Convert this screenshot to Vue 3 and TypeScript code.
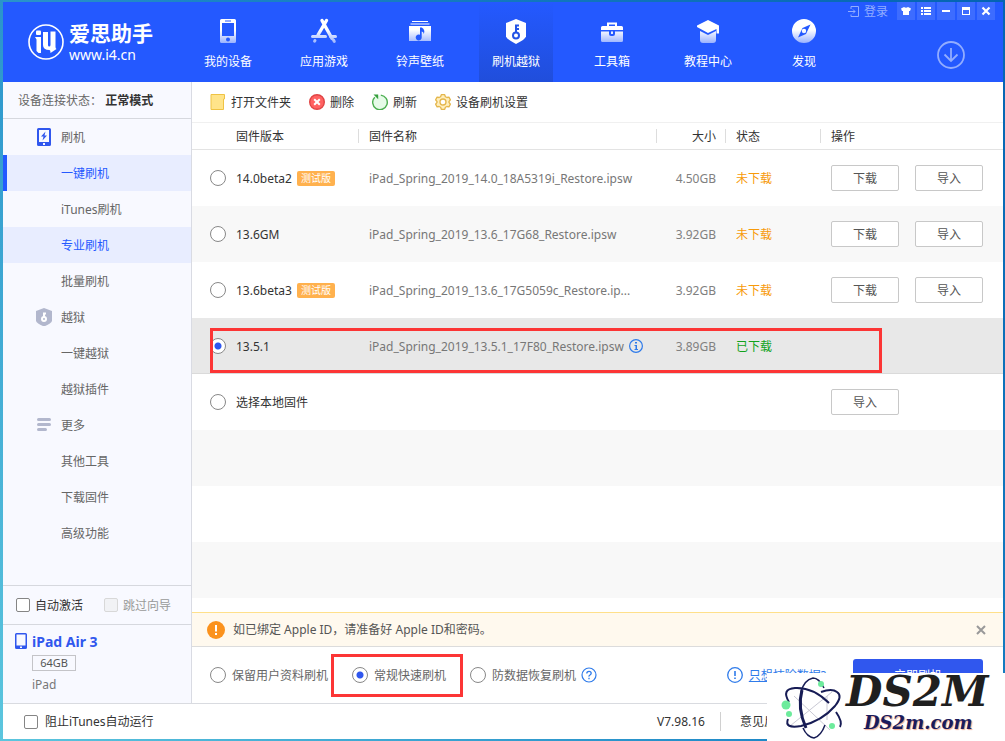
<script setup lang="ts">
import { ref } from 'vue'

interface NavItem {
  key: string
  label: string
}

interface SideItem {
  label: string
  icon?: 'flash' | 'shield' | 'more'
  active?: boolean
  current?: boolean
}

interface Firmware {
  id: string
  version: string
  beta?: boolean
  file?: string
  info?: boolean
  size?: string
  status?: string
  done?: boolean
  actions: string[]
}

const navItems: NavItem[] = [
  { key: 'device', label: '我的设备' },
  { key: 'apps', label: '应用游戏' },
  { key: 'media', label: '铃声壁纸' },
  { key: 'flash', label: '刷机越狱' },
  { key: 'tools', label: '工具箱' },
  { key: 'learn', label: '教程中心' },
  { key: 'discover', label: '发现' },
]

const sideItems: SideItem[] = [
  { label: '刷机', icon: 'flash' },
  { label: '一键刷机', active: true, current: true },
  { label: 'iTunes刷机' },
  { label: '专业刷机', active: true },
  { label: '批量刷机' },
  { label: '越狱', icon: 'shield' },
  { label: '一键越狱' },
  { label: '越狱插件' },
  { label: '更多', icon: 'more' },
  { label: '其他工具' },
  { label: '下载固件' },
  { label: '高级功能' },
]

const firmwares: Firmware[] = [
  { id: 'a', version: '14.0beta2', beta: true, file: 'iPad_Spring_2019_14.0_18A5319i_Restore.ipsw', size: '4.50GB', status: '未下载', actions: ['下载', '导入'] },
  { id: 'b', version: '13.6GM', file: 'iPad_Spring_2019_13.6_17G68_Restore.ipsw', size: '3.92GB', status: '未下载', actions: ['下载', '导入'] },
  { id: 'c', version: '13.6beta3', beta: true, file: 'iPad_Spring_2019_13.6_17G5059c_Restore.ip...', size: '3.92GB', status: '未下载', actions: ['下载', '导入'] },
  { id: 'd', version: '13.5.1', file: 'iPad_Spring_2019_13.5.1_17F80_Restore.ipsw', info: true, size: '3.89GB', status: '已下载', done: true, actions: [] },
  { id: 'e', version: '选择本地固件', actions: ['导入'] },
]

const modes = [
  { id: 'keep', label: '保留用户资料刷机' },
  { id: 'fast', label: '常规快速刷机' },
  { id: 'rescue', label: '防数据恢复刷机' },
]

const selected = ref('d')
const mode = ref('fast')
const autoActivate = ref(false)
const blockItunes = ref(false)
</script>

<template>
  <div class="desktop">
    <div class="window">
      <header class="header">
        <div class="brand">
          <svg class="brand-mark" width="36" height="36" viewBox="0 0 36 36" aria-hidden="true">
            <circle cx="18" cy="18" r="17" fill="none" stroke="#fff" stroke-width="1.6" />
            <rect x="8" y="6.500" width="5" height="4.500" rx="1" fill="#fff" />
            <path d="M7 13h6v16H10.500L8.500 27V15.500z" fill="#fff" />
            <path d="M15 8h5v13q0 1.500 1.200 1.500T22.500 21V7.500h5V23q0 1.500 1 2l-6 4q0-3-1-3-6.500 0-6.500-5z" fill="#fff" />
          </svg>
          <div class="brand-text">
            <div class="brand-name">爱思助手</div>
            <div class="brand-url">www.i4.cn</div>
          </div>
        </div>
        <nav class="nav">
          <button v-for="n in navItems" :key="n.key" type="button" class="nav-item" :class="{ on: n.key === 'flash' }">
            <svg width="26" height="26" viewBox="0 0 26 26" aria-hidden="true">
              <defs>
                <linearGradient :id="'g-' + n.key" x1="0" y1="0" x2="0" y2="26" gradientUnits="userSpaceOnUse">
                  <stop offset="0.45" stop-color="#fff" />
                  <stop offset="1" stop-color="#92adff" />
                </linearGradient>
              </defs>
              <g :fill="'url(#g-' + n.key + ')'">
                <path v-if="n.key === 'device'" fill-rule="evenodd" d="M6.500 1h13A1.500 1.500 0 0 1 21 2.500v21a1.500 1.500 0 0 1-1.500 1.500h-13A1.500 1.500 0 0 1 5 23.500v-21A1.500 1.500 0 0 1 6.500 1zM7 5v13h12V5zM10 2.500v1h6v-1zM13 19.500a2 2 0 1 0 0 4 2 2 0 0 0 0-4z" />
                <g v-else-if="n.key === 'apps'" fill="none" :stroke="'url(#g-' + n.key + ')'" stroke-linecap="round">
                  <path d="M11 2.500l10 18M15.500 2.500L7 17" stroke-width="3.400" />
                  <path d="M1.500 18.500h13M19.500 18.500h5" stroke-width="3" />
                  <path d="M22.500 22l.8 1.400M4 22.500l-.4.700" stroke-width="3" />
                </g>
                <path v-else-if="n.key === 'media'" fill-rule="evenodd" d="M5 3h16v1H5zM3.500 5.500h19v1h-19zM2 8h22v15H2zM13 9.500v7.300a3 3 0 1 0 1.700 2.700v-6q2 .3 2 2.500 2-4-2-6.500z" />
                <g v-else-if="n.key === 'flash'">
                  <path d="M13 1l10 4v13.500q-1 3-10 7.500-9-4.500-10-7.500V5z" fill="#fff" />
                  <path d="M13 15V6.500M13 7.500h3M13 11h3" fill="none" stroke="#2353e6" stroke-width="2" />
                  <circle cx="13" cy="17.500" r="3" fill="none" stroke="#2353e6" stroke-width="2" />
                </g>
                <g v-else-if="n.key === 'tools'">
                  <path d="M9 8V5.500h8V8" fill="none" stroke="#fff" stroke-width="2" />
                  <path d="M3.500 8h19Q24 8 24 9.500V12H2V9.500Q2 8 3.500 8zM2 13.500h8V16q0 2 2 2h2q2 0 2-2v-2.500h8v9q0 1.500-1.500 1.500h-19Q2 24 2 22.500z" />
                  <path d="M12 13.500h2V16h-2z" />
                </g>
                <g v-else-if="n.key === 'learn'">
                  <path d="M13 2l11 5.500v8h-2.500V11L13 15 2 9V7.500z" fill="#fff" />
                  <path d="M5 13l8 4 8-4v9q0 3-3 3H8q-3 0-3-3z" />
                </g>
                <path v-else fill-rule="evenodd" d="M13 1a12 12 0 1 1 0 24 12 12 0 0 1 0-24zM19.500 6.500l-8 3.500-4.500 9.500 8-3.500zM13 10.800a2.200 2.200 0 1 1 0 4.400 2.200 2.200 0 0 1 0-4.400z" />
              </g>
            </svg>
            <span>{{ n.label }}</span>
          </button>
        </nav>
        <div class="head-right">
          <div class="win-controls">
            <button type="button" class="login">
              <svg width="12" height="12" viewBox="0 0 12 12" fill="none" stroke="currentColor" aria-hidden="true">
                <path d="M3 3V.500h7.500v10H3V8.500M0 5.500h7M5 3.500l2 2-2 2" />
              </svg>
              <span>登录</span>
            </button>
            <button type="button" class="ctl" aria-label="皮肤">
              <svg width="10" height="10" viewBox="0 0 10 10"><path d="M3 1q2 1.500 4 0l3 1.500L9 5H8v4H2V5H1L0 2.500z" fill="#fff" /></svg>
            </button>
            <button type="button" class="ctl" aria-label="菜单">
              <svg width="10" height="10" viewBox="0 0 10 10"><path d="M0 1h2v2H0zM3 1h7v2H3zM0 4h2v2H0zM3 4h7v2H3zM0 7h2v2H0zM3 7h7v2H3z" fill="#fff" /></svg>
            </button>
            <button type="button" class="ctl" aria-label="最小化">
              <svg width="10" height="10" viewBox="0 0 10 10"><path d="M1 4h8v2H1z" fill="#fff" /></svg>
            </button>
            <button type="button" class="ctl" aria-label="最大化">
              <svg width="10" height="10" viewBox="0 0 10 10"><path fill-rule="evenodd" d="M1 1h8v8H1zM2 4v4h6V4z" fill="#fff" /></svg>
            </button>
            <button type="button" class="ctl" aria-label="关闭">
              <svg width="10" height="10" viewBox="0 0 10 10"><path d="M1.500 1.500l7 7M8.500 1.500l-7 7" stroke="#fff" stroke-width="2.200" /></svg>
            </button>
          </div>
          <button type="button" class="downloads" aria-label="下载管理">
            <svg width="28" height="28" viewBox="0 0 28 28" fill="none" stroke="#92adff">
              <circle cx="14" cy="14" r="13" stroke-width="1.800" />
              <path d="M14 7v13M7.500 13.500L14 20l6.500-6.500" stroke-width="1.800" />
            </svg>
          </button>
        </div>
      </header>

      <div class="body">
        <aside class="side">
          <div class="conn">设备连接状态： <b>正常模式</b></div>
          <nav class="side-nav">
            <a v-for="s in sideItems" :key="s.label" href="#" class="side-item" :class="{ active: s.active, current: s.current }">
              <svg v-if="s.icon === 'flash'" width="16" height="18" viewBox="0 0 16 18" aria-hidden="true">
                <path fill-rule="evenodd" d="M2.500 0h11Q15 0 15 1.500v15q0 1.500-1.500 1.500h-11Q1 18 1 16.500v-15Q1 0 2.500 0zM3 2v12h10V2zM7 15v2h2v-2z" fill="#3057ee" />
                <path d="M9.500 3.500L5 8.500h2.500L6.500 12.500 11 7.500H8.500z" fill="#3057ee" />
              </svg>
              <svg v-else-if="s.icon === 'shield'" width="16" height="18" viewBox="0 0 16 18" aria-hidden="true">
                <path d="M8 0l8 3v10q-1 2.500-8 5.500-7-3-8-5.500V3z" fill="#b2b7cd" />
                <path d="M8 9V4.500M8 5.500h2" stroke="#fff" stroke-width="2" />
                <circle cx="8" cy="11" r="2" fill="none" stroke="#fff" stroke-width="2" />
              </svg>
              <svg v-else-if="s.icon === 'more'" width="16" height="18" viewBox="0 0 16 18" aria-hidden="true">
                <path d="M2.500 3.500h11M2.500 8.500h11M2.500 13.500h7" stroke="#b2b7cd" stroke-width="3" stroke-linecap="round" />
              </svg>
              <span v-else class="no-icon"></span>
              <span>{{ s.label }}</span>
            </a>
          </nav>
          <div class="side-checks">
            <label class="check"><input v-model="autoActivate" type="checkbox" /><span>自动激活</span></label>
            <label class="check off"><input type="checkbox" disabled /><span>跳过向导</span></label>
          </div>
          <div class="device">
            <svg width="12" height="16" viewBox="0 0 12 16" aria-hidden="true">
              <path fill-rule="evenodd" d="M1.500 0h9Q12 0 12 1.500v13q0 1.500-1.500 1.500h-9Q0 16 0 14.500v-13Q0 0 1.500 0zM1.500 1.500v11h9v-11zM5 13.500v1.500h2v-1.500z" fill="#3057ee" />
            </svg>
            <div class="device-text">
              <div class="device-name">iPad Air 3</div>
              <div class="capacity">64GB</div>
              <div class="device-type">iPad</div>
            </div>
          </div>
        </aside>

        <main class="main">
          <div class="toolbar">
            <button type="button" class="tool">
              <svg width="16" height="16" viewBox="0 0 16 16" aria-hidden="true">
                <path d="M1 .500h13.500V5h-1v10.500H1z" fill="#ffe48a" stroke="#efc344" />
              </svg>
              <span>打开文件夹</span>
            </button>
            <button type="button" class="tool">
              <svg width="16" height="16" viewBox="0 0 16 16" aria-hidden="true">
                <circle cx="8" cy="8" r="7.300" fill="#ff6262" stroke="#e04545" stroke-width="1.400" />
                <path d="M5.200 5.200l5.600 5.600M10.800 5.200l-5.600 5.600" stroke="#fff" stroke-width="2" />
              </svg>
              <span>删除</span>
            </button>
            <button type="button" class="tool">
              <svg width="16" height="16" viewBox="0 0 16 16" aria-hidden="true">
                <circle cx="8" cy="8.500" r="7" fill="#e6fbe8" />
                <path d="M8.800 1.100A7.300 7.300 0 1 1 2.800 3.200" fill="none" stroke="#4caf50" stroke-width="1.400" />
                <path d="M1.500.500h4.700v4.700z" fill="#35a03c" />
              </svg>
              <span>刷新</span>
            </button>
            <button type="button" class="tool">
              <svg width="16" height="16" viewBox="0 0 16 16" aria-hidden="true">
                <path d="M6.300 .700h3.400l.7 2 1.500.8 2-.4 1.500 2.800L14 7.500v1l1.400 1.600-1.500 2.800-2-.4-1.500.8-.7 2H6.300l-.7-2-1.500-.8-2 .4L.6 10.100 2 8.500v-1L.6 5.900l1.500-2.800 2 .4 1.500-.8z" fill="#ffefbe" stroke="#e4b64c" stroke-width="1.300" stroke-linejoin="round" />
                <circle cx="8" cy="8" r="3" fill="#fff" stroke="#e4b64c" stroke-width="1.300" />
              </svg>
              <span>设备刷机设置</span>
            </button>
          </div>

          <div class="list">
            <table>
              <colgroup>
                <col class="c-ver" /><col /><col class="c-size" /><col class="c-state" /><col class="c-ops" />
              </colgroup>
              <thead>
                <tr>
                  <th class="ver-head">固件版本</th>
                  <th>固件名称</th>
                  <th class="size">大小</th>
                  <th>状态</th>
                  <th>操作</th>
                </tr>
              </thead>
              <tbody>
                <tr v-for="f in firmwares" :key="f.id" :class="{ sel: f.id === selected }">
                  <td class="ver">
                    <label class="pick">
                      <input v-model="selected" type="radio" name="firmware" :value="f.id" />
                      <span>{{ f.version }}</span>
                      <span v-if="f.beta" class="tag">测试版</span>
                    </label>
                    <i v-if="f.id === 'd'" class="frame"></i>
                  </td>
                  <td class="name">
                    <div class="file">
                      <span>{{ f.file }}</span>
                      <svg v-if="f.info" width="14" height="14" viewBox="0 0 14 14" aria-hidden="true">
                        <circle cx="7" cy="7" r="6.400" fill="none" stroke="#2f7bea" stroke-width="1.200" />
                        <path d="M6 3h2v1.500H6zM5.500 6H8v4h1v1H5.500v-1h1V7h-1z" fill="#2f7bea" />
                      </svg>
                    </div>
                  </td>
                  <td class="size">{{ f.size }}</td>
                  <td class="state" :class="{ done: f.done }">{{ f.status }}</td>
                  <td>
                    <div class="ops">
                      <button v-for="a in f.actions" :key="a" type="button" class="op">{{ a }}</button>
                    </div>
                  </td>
                </tr>
              </tbody>
            </table>
            <div class="stripes"></div>
          </div>

          <div class="notice">
            <svg width="18" height="18" viewBox="0 0 18 18" aria-hidden="true">
              <circle cx="9" cy="9" r="9" fill="#fb921d" />
              <path d="M8 4h2v6.500H8zM8 12h2v2H8z" fill="#fff" />
            </svg>
            <span>如已绑定 Apple ID，请准备好 Apple ID和密码。</span>
            <button type="button" class="close" aria-label="关闭提示">
              <svg width="10" height="10" viewBox="0 0 10 10"><path d="M1 1l8 8M9 1L1 9" stroke="#999" stroke-width="2" /></svg>
            </button>
          </div>

          <div class="options">
            <label v-for="m in modes" :key="m.id" class="mode" :class="{ framed: m.id === 'fast' }">
              <input v-model="mode" type="radio" name="mode" :value="m.id" />
              <span>{{ m.label }}</span>
            </label>
            <button type="button" class="help" aria-label="帮助">
              <svg width="16" height="16" viewBox="0 0 16 16" fill="none" stroke="#2f7bea">
                <circle cx="8" cy="8" r="7" stroke-width="1.200" />
                <path d="M5.800 6.500Q5.800 4.300 8 4.300t2.200 2Q10.200 7.300 9 8t-1 1.600M8 10.800v1.400" stroke-width="1.300" />
              </svg>
            </button>
            <div class="erase">
              <svg width="16" height="16" viewBox="0 0 16 16" fill="none" stroke="#2f7bea" aria-hidden="true">
                <circle cx="8" cy="8" r="7.300" stroke-width="1.300" />
                <path d="M8 4v5M8 10.500V12" stroke-width="1.600" />
              </svg>
              <a href="#">只想抹除数据?</a>
            </div>
            <button type="button" class="start">立即刷机</button>
          </div>
        </main>
      </div>

      <footer class="foot">
        <label class="check"><input v-model="blockItunes" type="checkbox" /><span>阻止iTunes自动运行</span></label>
        <span class="version">V7.98.16</span>
        <a href="#" class="feedback">意见反馈</a>
      </footer>
    </div>

    <div class="mark">
      <svg width="66" height="64" viewBox="0 0 66 64" fill="none" aria-hidden="true">
        <path d="M10 50L52 16M14 20l36 34M47 20v24" stroke="#c9c9d4" stroke-width="1" />
        <path d="M44 12Q39 2 33 2 24 4 21 16M23 52q4 9 11 10 7-2 11-13" stroke="#171c55" stroke-width="1.500" />
        <path d="M9 26Q1 13 15 12 33 11 49 27M56 36q7 10 4 15" stroke="#171c55" stroke-width="2" />
        <path d="M8 43Q4 53 21 50 42 45 55 30 63 20 57 16q-5-4-16 0" stroke="#171c55" stroke-width="2" />
        <path d="M22 14Q17 32 26 52" stroke="#171c55" stroke-width="3" />
        <circle cx="41" cy="8" r="3" fill="#6deb9c" />
        <circle cx="6" cy="29" r="4.500" fill="#6deb9c" />
        <circle cx="9" cy="38" r="3" fill="#6deb9c" />
        <circle cx="52" cy="50" r="3" fill="#6deb9c" />
      </svg>
      <div class="mark-text">
        <div class="mark-big">DS2M</div>
        <div class="mark-small">DS2m.com</div>
      </div>
    </div>
  </div>
</template>

<style>
body {
  margin: 0;
}
</style>

<style scoped>
.desktop {
  position: relative;
  box-sizing: border-box;
  min-height: 100vh;
  padding: 2px 2px 2px 3px;
  display: flex;
  background: linear-gradient(50deg, #5cc6de 0%, #1b85c6 50%, #0464b2 100%);
  font: 12px/19px "Noto Sans", "Noto Sans CJK SC", sans-serif;
  color: #333;
}
.desktop *,
.desktop *::after {
  box-sizing: border-box;
}
button {
  font: inherit;
  color: inherit;
  padding: 0;
  border: 0;
  background: none;
}
a {
  color: inherit;
  text-decoration: none;
}
svg {
  display: block;
  flex: none;
}
.window {
  flex: 1;
  min-width: 0;
  display: flex;
  flex-direction: column;
  background: #fff;
}

/* Header */
.header {
  display: flex;
  height: 80px;
  background: #2459ff;
  color: #fff;
}
.brand {
  flex: none;
  width: 188px;
  padding-left: 25px;
  display: flex;
  align-items: center;
  gap: 5px;
}
.brand-name {
  font-size: 21px;
  line-height: 26px;
  font-weight: 700;
}
.brand-url {
  font-size: 14px;
  line-height: 18px;
}
.nav {
  display: flex;
  gap: 22px;
}
.nav-item {
  width: 74px;
  padding-top: 4px;
  display: flex;
  flex-direction: column;
  align-items: center;
  justify-content: center;
  gap: 8px;
  white-space: nowrap;
}
.nav-item.on {
  background: linear-gradient(#2459ff, #204edb);
}
.head-right {
  flex: 1;
  padding-right: 8px;
  display: flex;
  flex-direction: column;
  align-items: flex-end;
}
.win-controls {
  display: flex;
  gap: 2px;
}
.login {
  display: flex;
  align-items: center;
  gap: 4px;
  margin-right: 7px;
  color: #92adff;
  white-space: nowrap;
}
.ctl {
  width: 18px;
  height: 18px;
  display: grid;
  place-items: center;
  background: #3d6cff;
}
.downloads {
  margin: 20px 30px 0 0;
}

/* Sidebar */
.body {
  flex: 1;
  display: flex;
  border-bottom: 1px solid #d9dbe0;
}
.side {
  flex: none;
  width: 189px;
  display: flex;
  flex-direction: column;
  background: #f8f9ff;
  border-right: 1px solid #d9dbe3;
}
.conn {
  height: 37px;
  line-height: 37px;
  padding-left: 15px;
  border-bottom: 1px solid #d6d8de;
  color: #666;
  white-space: pre;
}
.conn b {
  color: #333;
}
.side-nav {
  flex: 1;
}
.side-item {
  display: flex;
  align-items: center;
  gap: 9px;
  height: 36px;
  padding-left: 33px;
  color: #666;
}
.no-icon {
  width: 16px;
}
.side-item.active {
  background: #e8edff;
  color: #2459ff;
}
.side-item.current {
  padding-left: 29px;
  border-left: 4px solid #2459ff;
}
.side-checks {
  display: flex;
  gap: 21px;
  height: 39px;
  padding-left: 13px;
  border-top: 1px solid #d6d8de;
}
.check {
  display: flex;
  align-items: center;
  gap: 5px;
}
.check.off {
  color: #999;
}
input[type="checkbox"] {
  appearance: none;
  flex: none;
  width: 14px;
  height: 14px;
  margin: 0;
  border: 1px solid #858585;
  border-radius: 2px;
  background: #fff;
}
input[type="checkbox"]:checked {
  background: #3057ee;
}
input[type="checkbox"]:disabled {
  border-color: #d8d8d8;
  background: #f1f2f5;
}
.device {
  display: flex;
  gap: 5px;
  height: 79px;
  padding: 8px 0 0 12px;
  border-top: 1px solid #d6d8de;
}
.device-name {
  font-size: 14px;
  line-height: 18px;
  font-weight: 700;
  color: #3057ee;
}
.capacity {
  width: 44px;
  height: 16px;
  margin: 4px 0;
  border: 1px solid #c4c4c8;
  font-size: 11px;
  line-height: 14px;
  text-align: center;
  color: #555;
}
.device-type {
  color: #777;
}

/* Main */
.main {
  flex: 1;
  min-width: 0;
  display: flex;
  flex-direction: column;
}
.toolbar {
  display: flex;
  align-items: center;
  gap: 18px;
  height: 41px;
  padding-left: 18px;
  border-bottom: 1px solid #f0f0f0;
}
.tool {
  display: flex;
  align-items: center;
  gap: 5px;
}
.list {
  flex: 1;
  display: flex;
  flex-direction: column;
}
table {
  width: 100%;
  table-layout: fixed;
  border-spacing: 0;
}
.c-ver {
  width: 166px;
}
.c-size {
  width: 69px;
}
.c-state {
  width: 95px;
}
.c-ops {
  width: 183px;
}
th {
  height: 27px;
  padding: 0 0 0 11px;
  border-bottom: 1px solid #e3e3e3;
  font-weight: 400;
  text-align: left;
  background: linear-gradient(#ddd, #ddd) 0 6px / 1px 14px no-repeat;
}
.ver-head {
  padding-left: 44px;
  background: none;
}
td {
  height: 56px;
  padding: 0 0 0 11px;
}
tbody tr {
  position: relative;
}
tbody tr:nth-child(even) {
  background: #f8f8f8;
}
tbody tr.sel {
  background: #e8e8e8;
  box-shadow: inset 0 -1px #dadada;
}
td.ver {
  padding-left: 18px;
}
.pick {
  display: flex;
  align-items: center;
}
.pick span:first-of-type {
  margin-left: 10px;
}
input[type="radio"] {
  appearance: none;
  flex: none;
  width: 16px;
  height: 16px;
  margin: 0;
  border: 1px solid #888;
  border-radius: 50%;
  background: #fff;
}
input[type="radio"]:checked {
  background: radial-gradient(circle, #3057ee 0 3px, #fff 4px);
}
.tag {
  margin-left: 5px;
  padding: 0 4px;
  border-radius: 2px;
  background: #ffb14e;
  color: #fff;
  font-size: 10px;
  line-height: 15px;
}
.frame {
  position: absolute;
  left: 18px;
  right: 121px;
  top: 10px;
  bottom: 1px;
  border: 3px solid #fc3535;
  pointer-events: none;
}
.file {
  display: flex;
  align-items: center;
  gap: 5px;
  color: #777;
  white-space: nowrap;
}
.size {
  padding-left: 0;
  padding-right: 9px;
  text-align: right;
}
td.size {
  color: #808080;
}
.state {
  color: #f79a0a;
}
.state.done {
  color: #12a31c;
}
.ops {
  display: flex;
  gap: 16px;
}
.op {
  width: 68px;
  height: 26px;
  border: 1px solid #c8c8c8;
  border-radius: 2px;
  background: #fff;
  color: #555;
}
.stripes {
  flex: 1;
  background: repeating-linear-gradient(#f8f8f8 0 56px, #fff 56px 112px);
}
.notice {
  display: flex;
  align-items: center;
  gap: 8px;
  height: 35px;
  padding: 0 17px 0 15px;
  border-top: 1px solid #ffe08a;
  border-bottom: 1px solid #dcdcdc;
  background: #fff9ee;
  color: #555;
}
.close {
  margin-left: auto;
}
.options {
  display: flex;
  align-items: center;
  height: 56px;
  padding: 0 20px 0 18px;
  color: #666;
}
.mode {
  position: relative;
  display: flex;
  align-items: center;
  gap: 6px;
  margin-right: 24px;
  white-space: nowrap;
}
.mode:nth-of-type(3) {
  margin-right: 5px;
}
.framed::after {
  content: "";
  position: absolute;
  left: -21px;
  right: -17px;
  top: -12px;
  bottom: -12px;
  border: 3px solid #fc3535;
  pointer-events: none;
}
.erase {
  display: flex;
  align-items: center;
  gap: 6px;
  margin-left: auto;
  margin-right: 27px;
  color: #2f7bea;
}
.erase a {
  text-decoration: underline;
}
.start {
  width: 130px;
  height: 32px;
  border-radius: 3px;
  background: #3057ee;
  color: #fff;
}

/* Status bar */
.foot {
  display: flex;
  align-items: center;
  height: 35px;
  padding: 0 215px 0 21px;
}
.foot .check {
  gap: 7px;
}
.version {
  margin-left: auto;
  padding-right: 15px;
  border-right: 1px solid #d0d0d0;
}
.feedback {
  margin-left: 19px;
}

/* Corner mark */
.mark {
  position: absolute;
  right: 0;
  bottom: 0;
  width: 238px;
  height: 68px;
  padding: 3px 0 0 13px;
  display: flex;
  background: #fff;
}
.mark-text {
  font-family: "DejaVu Serif", serif;
  font-weight: 700;
  font-style: italic;
}
.mark-big {
  font-size: 42px;
  line-height: 32px;
  color: #1f1f1f;
}
.mark-small {
  padding: 4px 0 0 18px;
  font-size: 18px;
  line-height: 22px;
  color: #1b1b5c;
  text-shadow: 1px 1px 1px #f0a890;
}
</style>
